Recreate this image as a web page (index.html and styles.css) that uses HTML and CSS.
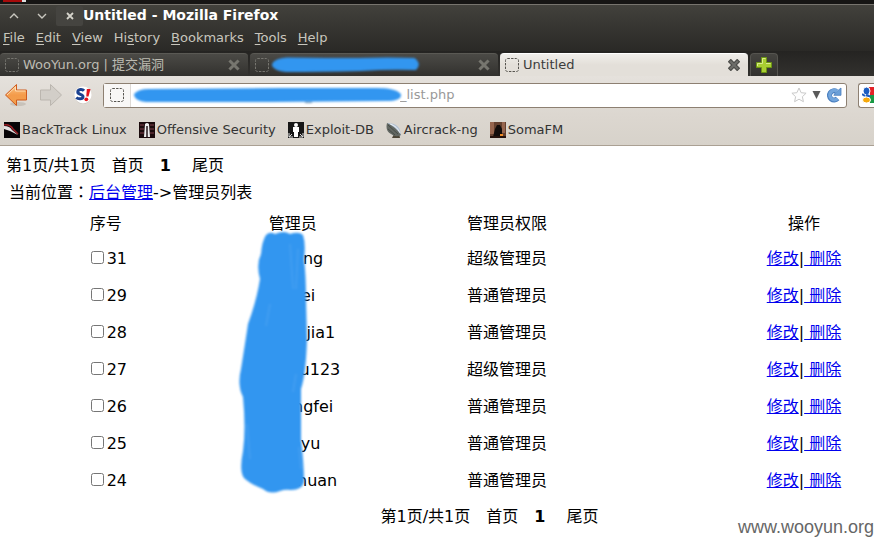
FILE: index.html
```html
<!DOCTYPE html>
<html lang="zh-CN">
<head>
<meta charset="utf-8">
<title>Untitled</title>
<link rel="stylesheet" href="styles.css">
</head>
<body>
<svg class="defs" width="0" height="0" aria-hidden="true">
  <symbol id="blank" viewBox="0 0 14 14"><rect x=".5" y=".5" width="13" height="13" rx="2" fill="none" stroke="currentColor" stroke-dasharray="2.4 1.2"/></symbol>
  <symbol id="cross" viewBox="0 0 12 12"><path d="M2.5 2.5l7 7M9.5 2.5l-7 7" stroke="currentColor" stroke-width="3" stroke-linecap="square"/></symbol>
  <symbol id="cross-active" viewBox="0 0 12 12"><path d="M2.800 2.800l6.400 6.400M9.200 2.800l-6.400 6.400" stroke="#4a4a47" stroke-width="4.400" stroke-linecap="square"/><path d="M2.800 2.800l6.400 6.400M9.200 2.800l-6.400 6.400" stroke="#6d6d69" stroke-width="2.200" stroke-linecap="square"/></symbol>
</svg>
<header class="chrome">
  <div class="desktop"><svg width="30" height="4"><path d="M3 0h19v2H3z" fill="#a80b0b"/><path d="M22 0h4v2h-4z" fill="#ddd"/></svg></div>
  <div class="titlebar">
    <button class="wm" aria-label="Minimize"><svg width="10" height="6"><path d="M1 5l4-4 4 4" fill="none" stroke="#c9c7bf" stroke-width="1.4"/></svg></button>
    <button class="wm" aria-label="Maximize"><svg width="10" height="6"><path d="M1 1l4 4 4-4" fill="none" stroke="#c9c7bf" stroke-width="1.4"/></svg></button>
    <button class="wm wm-close" aria-label="Close"><svg width="8" height="8"><path d="M1 1l6 6M7 1L1 7" stroke="#d5d3cb" stroke-width="1.800"/></svg></button>
    <strong>Untitled - Mozilla Firefox</strong>
  </div>
  <nav class="menubar">
    <button><u>F</u>ile</button><button><u>E</u>dit</button><button><u>V</u>iew</button><button>Hi<u>s</u>tory</button><button><u>B</u>ookmarks</button><button><u>T</u>ools</button><button><u>H</u>elp</button>
  </nav>
  <div class="tabs">
    <div class="tab"><svg class="fav"><use href="#blank"/></svg><span class="tab-title">WooYun.org | 提交漏洞</span><button class="close" aria-label="Close tab"><svg width="12" height="12"><use href="#cross"/></svg></button></div>
    <div class="tab"><svg class="fav"><use href="#blank"/></svg><span class="tab-title">
      <svg class="smear-tab" width="154" height="20"><path d="M5 10Q7 5 18 4.500Q60 5 90 5Q120 4 145 5Q150 9 146 13Q120 12 92 14Q50 15 17 15Q7 14 5 10Z" fill="#3296f0" stroke="#3296f0" stroke-width="4" stroke-linejoin="round"/></svg></span><button class="close" aria-label="Close tab"><svg width="12" height="12"><use href="#cross"/></svg></button></div>
    <div class="tab active"><svg class="fav"><use href="#blank"/></svg><span class="tab-title">Untitled</span><button class="close" aria-label="Close tab"><svg width="12" height="12"><use href="#cross-active"/></svg></button></div>
    <button class="newtab" aria-label="New tab"><svg width="16" height="16"><path d="M5.5.5h5v5h5v5h-5v5h-5v-5h-5v-5h5z" fill="#a9cf32" stroke="#6d9614"/><path d="M6.5 6.500v-5h3M1.500 9V6.500h5M10 6.500h4.500" fill="none" stroke="#d9ec8e"/></svg></button>
  </div>
  <div class="navbar">
    <button class="nav" aria-label="Back"><svg width="24" height="24">
      <defs><linearGradient id="or" x2="0" y2="1"><stop offset="0" stop-color="#fbc98b"/><stop offset=".5" stop-color="#f49b4a"/><stop offset="1" stop-color="#f0a04c"/></linearGradient></defs>
      <ellipse cx="14" cy="21" rx="8" ry="2" fill="#c8c2ba"/><path d="M1.500 12L12.500 1.500V7H22.500V17H12.500V22.500Z" fill="url(#or)" stroke="#cf5a1d" stroke-linejoin="round"/><path d="M3 12l8.500-8V8h10" fill="none" stroke="#fddcb2"/></svg></button>
    <button class="nav fwd" aria-label="Forward"><svg width="24" height="24"><path d="M22.500 12L11.500 1.500V7H1.500V17H11.500V22.500Z" fill="#d2cec8" stroke="#bbb6af" stroke-linejoin="round"/></svg></button>
    <button class="nav script" aria-label="NoScript"><svg width="18" height="18">
      <circle cx="9" cy="10" r="8" fill="#c9c4bd"/><circle cx="9" cy="9" r="8.500" fill="#fff"/><path d="M10 4.800C8.500 3 4 3 3.800 6C3.600 8.700 9.300 8 9 10.800C8.700 13.500 4 13.200 2.300 11.500" fill="none" stroke="#1b4190" stroke-width="3"/><path d="M12.800 3h3.700l-2 7.500h-2.200z" fill="#e5141c"/><circle cx="12.300" cy="13.300" r="1.900" fill="#e5141c"/></svg></button>
    <div class="urlbar">
      <span class="identity"><svg class="fav"><use href="#blank"/></svg></span>
      <input aria-label="Address" value="_list.php">
      <svg class="smear-url" width="274" height="18"><path d="M5 9Q8 5 18 5L150 4 245 4Q264 4 268 9Q268 13 255 13L140 14 15 14Q6 13 5 9Z" fill="#3296f0" stroke="#3296f0" stroke-width="4" stroke-linejoin="round"/><path d="M174 16.500h7" stroke="#6b8aa6"/></svg>
      <button class="nav" aria-label="Bookmark this page"><svg width="16" height="16"><path d="M8 1l2.100 4.700 5 .5-3.700 3.500 1 5L8 12.200l-4.400 2.500 1-5L.9 6.200l5-.5z" fill="#fdfdfd" stroke="#c9c9c9"/></svg></button>
      <button class="nav" aria-label="History"><svg width="9" height="8"><path d="M.5 0h8L4.500 8z" fill="#5a5a5a"/></svg></button>
      <button class="nav" aria-label="Reload"><svg width="16" height="16"><path d="M10.500 4.500A4.600 4.600 0 1 0 11.500 11.500" fill="none" stroke="#4a7fbf" stroke-width="5"/><path d="M7.800 8.300L9.800 5.500 12.500 3 15 1V8.300z" fill="#6a9fd8" stroke="#4a7fbf" stroke-width=".8"/><path d="M11 4.300A4.600 4.600 0 1 0 11.500 11.500" fill="none" stroke="#72a5dc" stroke-width="3.400"/></svg></button>
    </div>
    <div class="search"><svg width="12" height="16"><path d="M7 0h5v8H8z" fill="#e42127"/><path d="M8 8h4v8H8z" fill="#179844"/><ellipse cx="4.500" cy="4" rx="3.500" ry="4" fill="#1c5dc0" stroke="#fff"/><path d="M0 7l3 2" stroke="#1c5dc0" stroke-width="2"/><path d="M4 8l4 2" stroke="#1c5dc0" stroke-width="3"/><ellipse cx="4.500" cy="13" rx="4" ry="3" fill="#f6a90c" stroke="#fff"/></svg></div>
  </div>
  <nav class="bookmarks">
    <a href="#"><svg width="16" height="16"><path fill="#080506" d="M0 0h16v16H0z"/><path d="M0 3q6-1 9 4l5 5" fill="none" stroke="#9b1e25" stroke-width="1.500"/><path d="M0 4q6 0 8 4l6 5-8-4-6-2z" fill="#e6e1e1"/></svg>BackTrack Linux</a>
    <a href="#"><svg width="16" height="16"><path fill="#1b0b0d" d="M0 0h16v16H0z"/><path d="M1 3h4M1 7h4M1 11h4M11 3h4M11 7h4M11 11h4" stroke="#4d262c" stroke-width="2"/><path d="M5 15L6 2q2-2 4 0l1 13z" fill="#eee"/><path d="M8 4v11" stroke="#24171a" stroke-width="1.500"/></svg>Offensive Security</a>
    <a href="#"><svg width="16" height="16"><path fill="#171717" d="M0 0h16v16H0z"/><circle cx="8" cy="3" r="2" fill="#fff"/><path d="M5 5h6v5H10v5H6v-5H5z" fill="#fff"/><path d="M1 11v4h4M15 11v4h-4M1 15l3-3M15 15l-3-3" fill="none" stroke="#ddd"/></svg>Exploit-DB</a>
    <a href="#"><svg width="16" height="16"><path d="M8 12l-2 4h8l-1-5z" fill="#4d4637"/><path d="M1 1Q15 1 15 14Z" fill="#b4c3d4"/><path d="M4 2q7 2 10 9" fill="none" stroke="#edf2f7"/><path d="M1 1Q-1 9 5 12Q10 16 15 13Q10 5 1 1z" fill="#626762"/><path d="M2 3l10 9M2 7l7 6" stroke="#474d48"/></svg>Aircrack-ng</a>
    <a href="#"><svg width="16" height="16"><path fill="#64402f" d="M0 0h16v16H0z"/><path d="M0 0h4v12H0zM12 0h3v11h-3z" fill="#96654e"/><path d="M3 15l2-8 2-4h3l2 4v8z" fill="#120c0b"/><path d="M0 14h16v2H0z" fill="#25120d"/><path d="M10 12h3v2h-3z" fill="#f08b25"/></svg>SomaFM</a>
  </nav>
</header>
<main>
  <div class="pager"><span>第1页/共1页</span><span>首页</span><strong>1</strong><span>尾页</span></div>
  <p class="crumb">当前位置<span class="colon" lang="zh-TW">：</span><a href="#">后台管理</a>-&gt;管理员列表</p>
  <div class="list">
    <table>
      <colgroup><col class="c-id"><col class="c-name"><col class="c-role"><col class="c-op"></colgroup>
      <thead><tr><th>序号</th><th>管理员</th><th>管理员权限</th><th class="op">操作</th></tr></thead>
      <tbody>
        <tr><td><label><input type="checkbox">31</label></td><td><span class="name" style="width:63px">ng</span></td><td>超级管理员</td><td class="op"><a href="#">修改</a>|<a href="#"> 删除</a></td></tr>
        <tr><td><label><input type="checkbox">29</label></td><td><span class="name" style="width:47px">vei</span></td><td>普通管理员</td><td class="op"><a href="#">修改</a>|<a href="#"> 删除</a></td></tr>
        <tr><td><label><input type="checkbox">28</label></td><td><span class="name" style="width:87px">jia1</span></td><td>普通管理员</td><td class="op"><a href="#">修改</a>|<a href="#"> 删除</a></td></tr>
        <tr><td><label><input type="checkbox">27</label></td><td><span class="name" style="width:97px">u123</span></td><td>超级管理员</td><td class="op"><a href="#">修改</a>|<a href="#"> 删除</a></td></tr>
        <tr><td><label><input type="checkbox">26</label></td><td><span class="name" style="width:83px">ngfei</span></td><td>普通管理员</td><td class="op"><a href="#">修改</a>|<a href="#"> 删除</a></td></tr>
        <tr><td><label><input type="checkbox">25</label></td><td><span class="name" style="width:57px">nyu</span></td><td>普通管理员</td><td class="op"><a href="#">修改</a>|<a href="#"> 删除</a></td></tr>
        <tr><td><label><input type="checkbox">24</label></td><td><span class="name" style="width:91px">huan</span></td><td>普通管理员</td><td class="op"><a href="#">修改</a>|<a href="#"> 删除</a></td></tr>
      </tbody>
    </table>
    <svg class="smear-list" width="75" height="266" viewBox="236 230 75 266"><path d="M266 236Q270 232 275 235Q284 231 290 235Q299 232 303 236Q306 245 304 260Q306 275 306 300L307 340Q306 375 301 390L301 440Q304 465 304 483Q302 491 291 491Q285 490 280 492Q270 496 263 490Q250 485 244 479Q239 472 243 452Q246 430 243 398Q237 386 241 370Q245 345 248 325Q257 300 260 280Q256 265 261 255Q262 242 266 236Z" fill="#3296f0"/><path d="M290 245l3 45M298 250l-2 40M270 305l-4 22M296 375l-3 18M247 425l3 35M299 448l2 22" fill="none" stroke="#4ba2f1" stroke-width="2" opacity=".6"/></svg>
  </div>
  <div class="pager bottom"><span>第1页/共1页</span><span>首页</span><strong>1</strong><span>尾页</span></div>
  <div class="watermark">www.wooyun.org</div>
</main>
</body>
</html>
```
FILE: styles.css
```css
* { box-sizing: border-box; }
body {
  margin: 0;
  min-height: 100vh;
  display: flex;
  flex-direction: column;
  background: #fff;
  color: #000;
  font: 16px/20px "DejaVu Sans", "Noto Sans CJK SC", sans-serif;
  overflow-x: hidden;
}
svg { display: block; flex: none; }
.defs { position: absolute; }
button {
  margin: 0;
  padding: 0;
  border: 0;
  background: none;
  color: inherit;
  font: inherit;
}
.chrome { font-size: 13px; background: #2c2b28; }
.desktop { height: 4px; background: #161514; }

.titlebar {
  display: flex;
  align-items: center;
  height: 22px;
  border-top: 1px solid #77746e;
  background: linear-gradient(#42413c, #373632);
  color: #fff;
  font-size: 14px;
}
.titlebar strong { line-height: 18px; padding-bottom: 2px; }
.wm { width: 28px; height: 20px; display: grid; place-items: center; }
.wm-close { width: 27px; background: #454440; border-radius: 2px; }

.menubar {
  display: flex;
  gap: 11px;
  padding: 0 3px 2px;
  height: 25px;
  background: linear-gradient(#373632, #2a2926);
  color: #c8c6bd;
}
.menubar u { text-underline-offset: 2px; }

.tabs {
  display: flex;
  gap: 2px;
  padding-top: 2px;
  height: 25px;
  background: linear-gradient(#252422, #32312e);
}
.tab {
  flex: 0 1 248px;
  min-width: 0;
  display: flex;
  align-items: center;
  gap: 4px;
  padding: 0 8px 0 5px;
  border: 1px solid #5a5954;
  border-width: 1px 0 0;
  border-radius: 4px 4px 0 0;
  background: linear-gradient(#4b4a46, #32312e);
  color: #bdbbb2;
}
.tab-title { flex: 1; min-width: 0; white-space: nowrap; }
.fav { width: 14px; height: 14px; color: #777670; }
.close { color: #77766f; }
.tab.active {
  border-color: #fff;
  background: linear-gradient(#f0eeea, #e3dfd9 50%);
  color: #3c3c3c;
}
.active .fav, .identity .fav { color: #55534e; }
.smear-tab { margin-left: -4px; filter: blur(1px); }
.newtab {
  width: 28px;
  display: grid;
  place-items: center;
  border: 1px solid #55544f;
  border-bottom: 0;
  border-radius: 4px 4px 0 0;
  background: linear-gradient(#454440, #32312e);
}

.navbar {
  display: flex;
  align-items: center;
  gap: 11px;
  height: 38px;
  padding-left: 4px;
  background: linear-gradient(#e5e1dc, #dcd7d0);
}
.urlbar {
  position: relative;
  flex: 1;
  display: flex;
  align-items: center;
  gap: 5px;
  height: 25px;
  min-width: 0;
  padding-right: 4px;
  border: 1px solid #8d8072;
  border-radius: 3px;
  background: #fff;
}
.identity {
  display: grid;
  place-items: center;
  width: 27px;
  height: 23px;
  border-right: 1px solid #dedad6;
  background: #f8f7f6;
}
.urlbar input {
  flex: 1;
  min-width: 0;
  height: 20px;
  padding: 0 0 0 264px;
  border: 0;
  outline: 0;
  background: none;
  color: #999;
  font: inherit;
}
.smear-url { position: absolute; left: 27px; top: 2px; filter: blur(1px); }
.search {
  width: 16px;
  height: 25px;
  display: flex;
  align-items: center;
  padding-left: 3px;
  overflow: hidden;
  border: 1px solid #8d8072;
  border-right: 0;
  border-radius: 3px 0 0 3px;
  background: #fff;
}
.bookmarks {
  display: flex;
  gap: 12px;
  height: 32px;
  padding: 0 4px;
  border-bottom: 1px solid #aaa093;
  background: linear-gradient(#dcd7d0, #d7d2ca);
}
.bookmarks a {
  display: flex;
  align-items: center;
  gap: 2px;
  color: #333;
  text-decoration: none;
  white-space: nowrap;
}

main { position: relative; flex: 1; padding-top: 10px; }
a { color: #00e; }
.pager { display: flex; gap: 16px; padding-left: 6px; }
.pager strong { padding-right: 5px; }
.crumb { margin: 5px 0 0; padding-left: 9px; }
.colon { font-family: "Noto Sans CJK TC", sans-serif; }
.list { position: relative; padding-top: 5px; }
table { width: 100%; table-layout: fixed; border-collapse: collapse; }
.c-id { width: 24%; }
.c-name { width: 19%; }
.c-role { width: 30%; }
.c-op { width: 27%; }
th, td { padding: 0; height: 37px; text-align: center; font-weight: 400; white-space: nowrap; }
th { height: 32px; }
.op { padding-left: 96px; }
th:first-child { padding-left: 2px; }
td:first-child { padding-left: 4px; }
td input { width: 13px; height: 13px; margin: 3px 3px 3px 4px; }
.name { display: inline-block; margin-right: 2px; text-align: right; }
.smear-list { position: absolute; left: 27%; top: 26px; filter: blur(1px); }
.pager.bottom { justify-content: center; padding: 8px 0 0 105px; }
.watermark {
  position: absolute;
  right: 0;
  bottom: 0;
  color: #666;
  font: 18px/20px "Liberation Sans", sans-serif;
}
```
